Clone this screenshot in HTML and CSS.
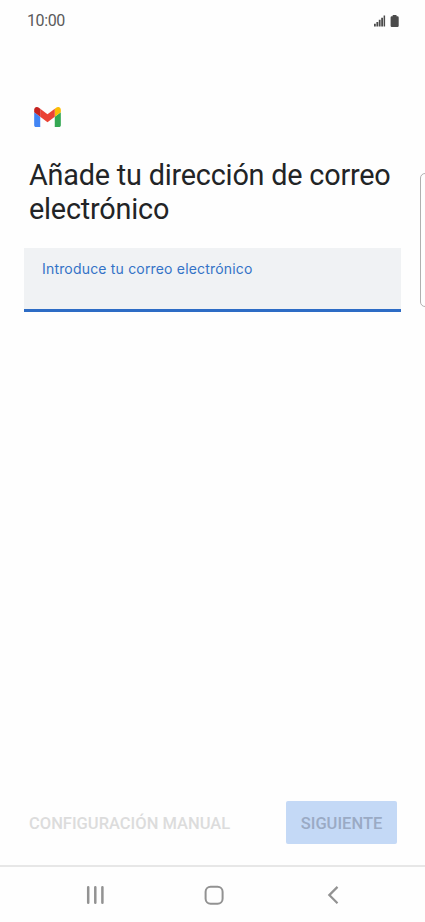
FILE: index.html
```html
<!DOCTYPE html>
<html lang="es">
<head>
<meta charset="utf-8">
<title>Correo</title>
<link rel="stylesheet" href="styles.css">
</head>
<body>
<div class="screen">
  <header class="status">
    <span class="clock">10:00</span>
    <svg class="status-icons" width="26" height="14" viewBox="0 0 26 14" fill="#4b4b4b">
      <path d="M0 9.8h1.8v2.7H0zM2.4 8h1.8v4.5H2.4zM4.8 5.8h1.8v6.7H4.8zM7.2 3.7h1.8v8.8H7.2zM9.6 1.5h1.5v11H9.6z"/>
      <path d="M18.7 1h3.8v1.2h1q1.2 0 1.2 1.2v8.4q0 1.2-1.2 1.2h-5.7q-1.2 0-1.2-1.2V3.4q0-1.2 1.2-1.2h.9z"/>
    </svg>
  </header>
  <main class="content">
    <svg class="logo" width="27" height="20" viewBox="52 42 88 66">
      <path fill="#4285f4" d="M58 108h14V74L52 59v43c0 3.32 2.69 6 6 6"/>
      <path fill="#34a853" d="M120 108h14c3.32 0 6-2.69 6-6V59l-20 15"/>
      <path fill="#fbbc04" d="M120 48v26l20-15v-8c0-7.42-8.47-11.65-14.4-7.2"/>
      <path fill="#ea4335" d="M72 74V48l24 18 24-18v26L96 92"/>
      <path fill="#c5221f" d="M52 51v8l20 15V48l-5.6-4.2c-5.94-4.45-14.4-.22-14.4 7.2"/>
    </svg>
    <h1 class="title">Añade tu dirección de correo electrónico</h1>
    <div class="field"><label class="label">Introduce tu correo electrónico</label></div>
  </main>
  <div class="edge-panel"></div>
  <div class="actions">
    <span class="manual">CONFIGURACIÓN MANUAL</span>
    <button class="next" disabled>SIGUIENTE</button>
  </div>
  <nav class="navbar">
    <svg width="425" height="55" viewBox="0 0 425 55" fill="none" stroke="#929292" stroke-width="2">
      <path stroke-width="2.5" stroke-linecap="round" d="M88.2 20.2v15.6M95.3 20.2v15.6M102.4 20.2v15.6"/>
      <rect x="205.6" y="19.7" width="17" height="17" rx="5"/>
      <path stroke-width="2.2" d="M337.5 19.9l-8.2 8.2 8.2 8.2"/>
    </svg>
  </nav>
</div>
</body>
</html>
```
FILE: styles.css
```css
* {
  box-sizing: border-box;
}

body {
  margin: 0;
  background: #fefefe;
  font-family: Roboto, sans-serif;
}

.screen {
  position: relative;
  display: flex;
  flex-direction: column;
  width: 425px;
  height: 922px;
  overflow: hidden;
}

.status {
  display: flex;
  justify-content: space-between;
  align-items: center;
  height: 41px;
  padding: 0 25px 0 27px;
}

.clock {
  color: #5a5a5a;
  font-size: 16px;
  letter-spacing: -0.4px;
  line-height: 20px;
}

.content {
  flex: 1;
  padding: 66px 24px 0;
}

.logo {
  display: block;
  margin-left: 10px;
}

.title {
  margin: 32px 0 0 5px;
  color: #222426;
  font-size: 28.8px;
  font-weight: 400;
  letter-spacing: -0.2px;
  line-height: 33.5px;
}

.field {
  height: 64px;
  margin-top: 22px;
  padding: 11px 18px;
  border-bottom: 3px solid #2d6cc5;
  background: #f0f2f4;
}

.label {
  display: block;
  color: #3472c7;
  font-family: Inter, sans-serif;
  font-size: 14px;
  letter-spacing: 0.18px;
  line-height: 20px;
  white-space: nowrap;
}

.edge-panel {
  position: absolute;
  top: 173px;
  left: 420px;
  width: 12px;
  height: 134px;
  border: 1px solid #b0b0b0;
  border-radius: 5px;
}

.actions {
  display: flex;
  justify-content: space-between;
  align-items: center;
  height: 43px;
  margin: 0 28px 21px 29px;
}

.manual,
.next {
  font-family: Roboto, sans-serif;
  font-size: 16.5px;
  font-weight: 500;
  white-space: nowrap;
}

.manual {
  padding-top: 2px;
  color: #dcdcdc;
}

.next {
  width: 111px;
  height: 43px;
  padding: 2px 0 0;
  border: 0;
  border-radius: 2px;
  background: #c4d9f6;
  color: #9aaac4;
}

.navbar {
  height: 57px;
  border-top: 2px solid #e7e7e7;
}

.navbar svg {
  display: block;
}
```
